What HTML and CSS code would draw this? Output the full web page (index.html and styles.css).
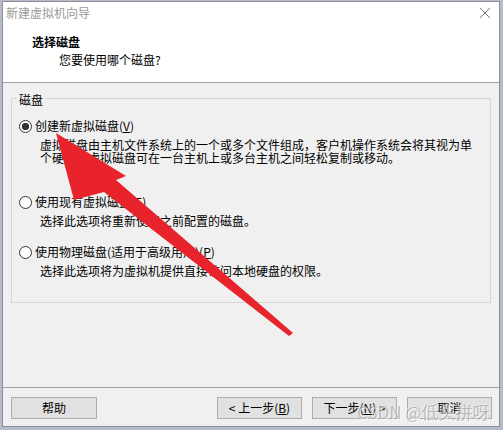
FILE: index.html
```html
<!DOCTYPE html>
<html lang="zh-CN">
<head>
<meta charset="utf-8">
<title>新建虚拟机向导</title>
<link rel="stylesheet" href="styles.css">
</head>
<body>
<div class="window">
  <div class="header">
    <div class="titlebar">
      <span class="title">新建虚拟机向导</span>
      <svg class="close" width="12" height="12" viewBox="0 0 12 12"><path d="M1 1 L11 11 M11 1 L1 11" stroke="#777" stroke-width="1" fill="none"/></svg>
    </div>
    <div class="headline">
      <div class="h-title">选择磁盘</div>
      <div class="h-sub">您要使用哪个磁盘?</div>
    </div>
  </div>
  <div class="content">
    <fieldset class="group">
      <legend class="legend">磁盘</legend>
      <div class="option opt1">
        <div class="opt-row"><span class="radio checked"></span><span class="opt-label">创建新虚拟磁盘(<u>V</u>)</span></div>
        <div class="desc">虚拟磁盘由主机文件系统上的一个或多个文件组成，客户机操作系统会将其视为单<br>个硬盘。虚拟磁盘可在一台主机上或多台主机之间轻松复制或移动。</div>
      </div>
      <div class="option opt2">
        <div class="opt-row"><span class="radio"></span><span class="opt-label">使用现有虚拟磁盘(<u>E</u>)</span></div>
        <div class="desc">选择此选项将重新使用之前配置的磁盘。</div>
      </div>
      <div class="option opt3">
        <div class="opt-row"><span class="radio"></span><span class="opt-label">使用物理磁盘(适用于高级用户)(<u>P</u>)</span></div>
        <div class="desc">选择此选项将为虚拟机提供直接访问本地硬盘的权限。</div>
      </div>
    </fieldset>
  </div>
  <div class="footer">
    <button class="btn btn-help">帮助</button>
    <div class="spacer"></div>
    <div class="nav">
      <button class="btn">&lt; 上一步(<u>B</u>)</button>
      <button class="btn">下一步(<u>N</u>) &gt;</button>
      <button class="btn">取消</button>
    </div>
  </div>
</div>
<svg class="arrow" width="503" height="430" viewBox="0 0 503 430">
  <polygon points="56,133 126,176 116,180 293,333 289,336 104,192 74,200" fill="#e8232b"/>
</svg>
<div class="watermark">CSDN @低头拼呀</div>
</body>
</html>
```

FILE: styles.css
```css
* { box-sizing: border-box; }
html, body { margin: 0; padding: 0; }
body {
  width: 503px;
  height: 430px;
  overflow: hidden;
  background: #b4bccb;
  font-family: "Noto Sans CJK SC", "Liberation Sans", sans-serif;
  font-size: 12px;
  color: #000;
  position: relative;
}
.window {
  margin: 1px 0 0 2px;
  width: 498px;
  height: 426px;
  border: 1px solid #8f8f8f;
  display: flex;
  flex-direction: column;
  background: #f0f0f0;
}
.header {
  height: 81px;
  background: #fff;
  border-bottom: 1px solid #a0a0a0;
}
.titlebar {
  height: 22px;
  display: flex;
  align-items: center;
  justify-content: space-between;
  padding: 0 8px 0 3px;
}
.title {
  color: #999;
  line-height: 22px;
}
.close { display: block; margin-top: 0; }
.headline { padding-left: 29px; }
.h-title {
  margin-top: 10px;
  line-height: 16px;
  font-weight: bold;
}
.h-sub {
  margin-top: 2px;
  margin-left: 27px;
  line-height: 16px;
}
.content {
  flex: 1;
  padding-top: 5px;
}
.group {
  margin: 0 8px;
  padding: 0 0 25px 0;
  border: 1px solid #d5d5d5;
  min-width: 0;
}
.legend {
  margin-left: 5px;
  padding: 4px 2px 0 2px;
  line-height: 16px;
}
.option { padding-left: 7px; }
.opt1 { margin-top: 10px; }
.opt2 { margin-top: 30px; }
.opt3 { margin-top: 17px; }
.opt-row {
  display: flex;
  align-items: center;
  height: 16px;
}
.radio {
  width: 13px;
  height: 13px;
  border: 1px solid #333;
  border-radius: 50%;
  background: #fff;
  margin-right: 3px;
  flex: none;
}
.radio.checked {
  background: radial-gradient(circle, #333 0 3.4px, #fff 4px);
}
.opt-label { line-height: 16px; }
.desc {
  margin-top: 4px;
  margin-left: 21px;
  line-height: 13px;
  white-space: nowrap;
}
.footer {
  height: 39px;
  border-top: 1px solid #a0a0a0;
  padding: 9px 7px 0 8px;
  display: flex;
  align-items: flex-start;
}
.spacer { flex: 1; }
.nav { display: flex; gap: 10px; }
.btn {
  width: 85px;
  height: 22px;
  background: #e1e1e1;
  border: 1px solid #adadad;
  font-family: "Noto Sans CJK SC", "Liberation Sans", sans-serif;
  font-size: 12px;
  color: #000;
  padding: 0;
  line-height: 20px;
}
.btn-help { width: 86px; }
.arrow {
  position: absolute;
  left: 0;
  top: 0;
  pointer-events: none;
}
.watermark {
  position: absolute;
  left: 357px;
  top: 401px;
  font-size: 17px;
  line-height: 22px;
  white-space: nowrap;
  color: rgba(150, 150, 150, 0.6);
  text-shadow: 1px 1px 0 rgba(255, 255, 255, 0.7), -1px -1px 0 rgba(255, 255, 255, 0.4);
  pointer-events: none;
}
```
